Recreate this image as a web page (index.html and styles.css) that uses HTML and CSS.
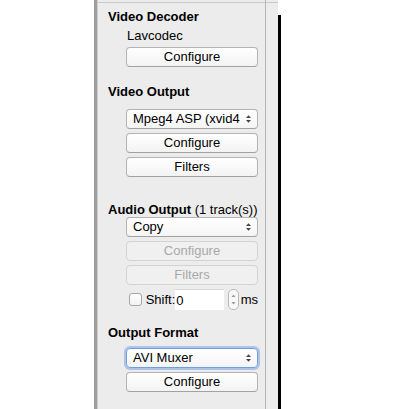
FILE: index.html
```html
<!DOCTYPE html>
<html>
<head>
<meta charset="utf-8">
<link rel="stylesheet" href="styles.css">
</head>
<body>
<div class="window">
  <div class="gutter"></div>
  <div class="edge"></div>
  <aside class="panel">
    <section class="group group-decoder">
      <h3 class="heading">Video Decoder</h3>
      <div class="label">Lavcodec</div>
      <div class="controls controls-tight">
        <button class="btn">Configure</button>
      </div>
    </section>

    <section class="group group-vout">
      <h3 class="heading">Video Output</h3>
      <div class="controls controls-vout">
        <div class="select"><span class="select-text">Mpeg4 ASP (xvid4</span><svg class="arrows" width="7" height="10" viewBox="0 0 7 10"><path d="M1 4 L3.5 1.2 L6 4 Z M1 6 L3.5 8.8 L6 6 Z" fill="#444"/></svg></div>
        <button class="btn">Configure</button>
        <button class="btn">Filters</button>
      </div>
    </section>

    <section class="group group-aout">
      <h3 class="heading">Audio Output <span class="normal">(1 track(s))</span></h3>
      <div class="controls">
        <div class="select"><span class="select-text">Copy</span><svg class="arrows" width="7" height="10" viewBox="0 0 7 10"><path d="M1 4 L3.5 1.2 L6 4 Z M1 6 L3.5 8.8 L6 6 Z" fill="#444"/></svg></div>
        <button class="btn" disabled>Configure</button>
        <button class="btn" disabled>Filters</button>
        <div class="shift-row">
          <span class="checkbox"></span>
          <span class="shift-label">Shift:</span>
          <span class="num-input">0</span>
          <span class="spinner"><svg width="9" height="19" viewBox="0 0 9 19"><path d="M2.5 7 L4.5 4.5 L6.5 7 Z M2.5 12 L4.5 14.5 L6.5 12 Z" fill="#9a9a9a"/></svg></span>
          <span class="unit">ms</span>
        </div>
      </div>
    </section>

    <section class="group group-format">
      <h3 class="heading">Output Format</h3>
      <div class="controls controls-format">
        <div class="select select-focus"><span class="select-text">AVI Muxer</span><svg class="arrows" width="7" height="10" viewBox="0 0 7 10"><path d="M1 4 L3.5 1.2 L6 4 Z M1 6 L3.5 8.8 L6 6 Z" fill="#444"/></svg></div>
        <button class="btn">Configure</button>
      </div>
    </section>
  </aside>
  <div class="strip"></div>
  <div class="canvas"><div class="view"></div></div>
</div>
</body>
</html>
```
FILE: styles.css
```css
html, body {
  margin: 0;
  padding: 0;
  background: #fff;
}
body {
  width: 404px;
  height: 409px;
  overflow: hidden;
  font-family: "Liberation Sans", Arial, sans-serif;
  color: #000;
}
.window {
  display: flex;
  height: 409px;
}
.gutter {
  width: 94px;
  flex: none;
  background: #fff;
}
.edge {
  width: 3px;
  flex: none;
  background: #9e9e9e;
  border-right: 1px solid #cdcdcd;
}
.panel {
  width: 168px;
  flex: none;
  box-sizing: border-box;
  background: #ececec;
  border-right: 1px solid #b4b4b4;
  box-shadow: inset 0 3px 0 -1px #ececec, inset 0 3px 0 0 #c9c9c9;
  padding: 10px 0 0 10px;
}
.strip {
  width: 12px;
  flex: none;
  background: #ececec;
  box-shadow: inset 0 3px 0 -1px #ececec, inset 0 3px 0 0 #c9c9c9;
}
.canvas {
  flex: 1;
  padding-top: 15px;
  background: #fff;
}
.view {
  height: 100%;
  border-left: 3px solid #000;
}
.heading {
  margin: 0;
  font-size: 13px;
  line-height: 14px;
  font-weight: bold;
  white-space: nowrap;
}
.heading .normal {
  font-weight: normal;
}
.group-vout { margin-top: 18px; }
.group-aout { margin-top: 26px; }
.group-format { margin-top: 16px; }
.label {
  margin: 4px 0 0 19px;
  font-size: 13px;
  line-height: 16px;
}
.controls {
  display: flex;
  flex-direction: column;
  gap: 4px;
  margin-left: 18px;
  width: 132px;
}
.controls-tight { margin-top: 3px; }
.controls-vout { margin-top: 10px; }
.controls-format { margin-top: 8px; }
.btn {
  display: block;
  width: 132px;
  height: 20px;
  box-sizing: border-box;
  margin: 0;
  padding: 0;
  border: 1px solid #b3b3b3;
  border-bottom-color: #a2a2a2;
  border-radius: 4px;
  background: linear-gradient(#ffffff, #f3f3f3);
  font-family: "Liberation Sans", Arial, sans-serif;
  font-size: 13px;
  line-height: 18px;
  color: #000;
  text-align: center;
}
.btn:disabled {
  background: #f0f0f0;
  border-color: #d3d3d3;
  color: #a9a9a9;
}
.select {
  position: relative;
  display: flex;
  align-items: center;
  width: 132px;
  height: 20px;
  box-sizing: border-box;
  border: 1px solid #b3b3b3;
  border-bottom-color: #a2a2a2;
  border-radius: 4px;
  background: linear-gradient(#ffffff, #f5f5f5);
  padding: 0 12px 0 6px;
  font-size: 13px;
  line-height: 18px;
}
.select-text {
  white-space: nowrap;
  flex: 1;
}
.arrows {
  position: absolute;
  right: 5px;
  top: 4px;
}
.select-focus {
  border-color: #6f9fdc;
  box-shadow: 0 0 0 2px rgba(120, 165, 225, 0.55);
}
.shift-row {
  display: flex;
  align-items: center;
  height: 21px;
  font-size: 13px;
}
.checkbox {
  width: 13px;
  height: 13px;
  box-sizing: border-box;
  margin-left: 3px;
  border: 1px solid #a6a6a6;
  border-radius: 3px;
  background: linear-gradient(#fff, #f2f2f2);
}
.shift-label {
  margin-left: 4px;
}
.num-input {
  width: 50px;
  height: 21px;
  box-sizing: border-box;
  background: #fff;
  border-top: 1px solid #d8d8d8;
  padding-left: 1px;
  line-height: 21px;
}
.spinner {
  display: flex;
  width: 11px;
  height: 21px;
  margin-left: 4px;
  box-sizing: border-box;
  border: 1px solid #b8b8b8;
  border-radius: 5px;
  background: #f8f8f8;
}
.spinner svg { display: block; }
.unit {
  margin-left: 2px;
}
```
